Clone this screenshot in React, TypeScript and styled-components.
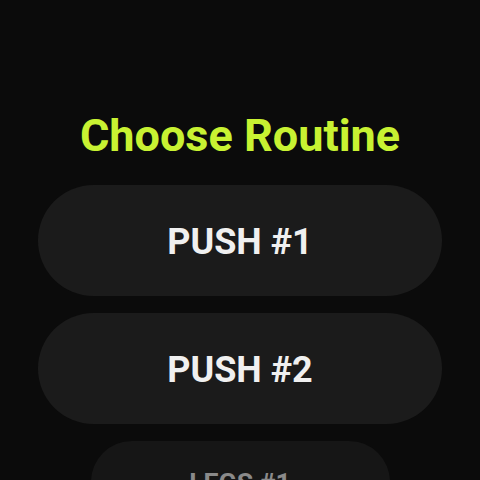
import { createGlobalStyle, styled } from "styled-components";

const GlobalStyle = createGlobalStyle`
  html, body {
    margin: 0;
    padding: 0;
    background: #0b0b0b;
  }
  body {
    font-family: Roboto, "Liberation Sans", sans-serif;
  }
`;

const routines = [
  { name: "PUSH #1", scale: 1, dim: false },
  { name: "PUSH #2", scale: 1, dim: false },
  { name: "LEGS #1", scale: 0.74, dim: true },
];

export default function App() {
  return (
    <>
      <GlobalStyle />
      <Screen>
        <Title>Choose Routine</Title>
        <List>
          {routines.map((r) => (
            <Chip key={r.name} $scale={r.scale} $dim={r.dim}>
              <ChipLabel $scale={r.scale} $dim={r.dim}>
                {r.name}
              </ChipLabel>
            </Chip>
          ))}
        </List>
      </Screen>
    </>
  );
}

const Screen = styled.div`
  width: 480px;
  height: 480px;
  overflow: hidden;
  display: flex;
  flex-direction: column;
  align-items: center;
  padding-top: 113px;
  box-sizing: border-box;
  background: #0b0b0b;
`;

const Title = styled.h1`
  margin: 0;
  font-size: 45px;
  line-height: 46px;
  font-weight: 700;
  color: #c8f232;
`;

const List = styled.div`
  margin-top: 26px;
  display: flex;
  flex-direction: column;
  align-items: center;
  gap: 17px;
`;

const Chip = styled.div<{ $scale: number; $dim: boolean }>`
  width: ${(p) => Math.round(404 * p.$scale)}px;
  height: ${(p) => Math.round(111 * p.$scale)}px;
  border-radius: 999px;
  background: ${(p) => (p.$dim ? "#161616" : "#1b1b1b")};
  display: flex;
  justify-content: center;
  align-items: center;
  flex-shrink: 0;
`;

const ChipLabel = styled.span<{ $scale: number; $dim: boolean }>`
  font-size: ${(p) => 36 * p.$scale}px;
  font-weight: 700;
  padding-top: 2px;
  color: ${(p) => (p.$dim ? "#8a8a8a" : "#f0f0f0")};
`;
